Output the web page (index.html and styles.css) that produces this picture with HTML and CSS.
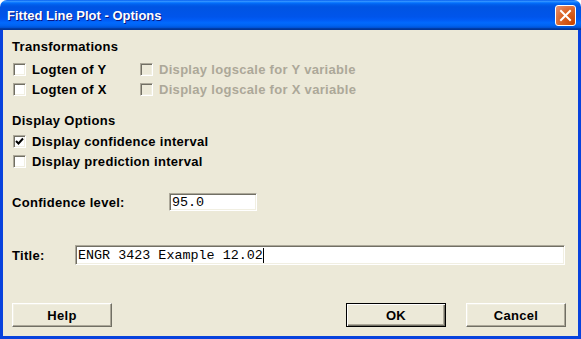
FILE: index.html
```html
<!DOCTYPE html>
<html lang="en">
<head>
    <meta charset="UTF-8">
    <title>Fitted Line Plot - Options</title>
    <link rel="stylesheet" href="styles.css">
</head>
<body>

    <div class="window">
        <div class="titlebar">
            <span class="title-text">Fitted Line Plot - Options</span>
            <button class="close-btn" aria-label="Close">
                <svg width="13" height="13" viewBox="0 0 13 13">
                    <path d="M2 2 L11 11 M11 2 L2 11" stroke="#fff" stroke-width="2" stroke-linecap="square"/>
                </svg>
            </button>
        </div>

        <div class="client">
            <div class="heading">Transformations</div>
            <div class="grid-rows">
                <label class="opt"><span class="box"></span>Logten of Y</label>
                <label class="opt disabled"><span class="box"></span>Display logscale for Y variable</label>
                <label class="opt"><span class="box"></span>Logten of X</label>
                <label class="opt disabled"><span class="box"></span>Display logscale for X variable</label>
            </div>

            <div class="heading heading-second">Display Options</div>
            <div class="rows">
                <label class="opt">
                    <span class="box">
                        <svg width="9" height="9" viewBox="0 0 9 9"><path d="M1 4 L3.5 6.5 L8 1.5" stroke="#000" stroke-width="2" fill="none"/></svg>
                    </span>Display confidence interval
                </label>
                <label class="opt"><span class="box"></span>Display prediction interval</label>
            </div>

            <div class="field conf-row">
                <span class="field-label conf-label">Confidence level:</span>
                <div class="edit conf-edit">95.0</div>
            </div>

            <div class="field title-row">
                <span class="field-label title-label">Title:</span>
                <div class="edit title-edit">ENGR 3423 Example 12.02<span class="caret"></span></div>
            </div>

            <div class="button-row">
                <button class="btn">Help</button>
                <div class="right-buttons">
                    <button class="btn default">OK</button>
                    <button class="btn">Cancel</button>
                </div>
            </div>
        </div>
    </div>

</body>
</html>
```

FILE: styles.css
```css
body {
    margin: 0;
    background-color: #fff;
    font-family: "Liberation Sans", Arial, sans-serif;
}
.window {
    width: 581px;
    height: 339px;
    display: flex;
    flex-direction: column;
    box-sizing: border-box;
}
.titlebar {
    height: 30px;
    flex: none;
    display: flex;
    align-items: center;
    justify-content: space-between;
    padding: 0 5px 0 7px;
    border-radius: 7px 7px 0 0;
    background: linear-gradient(#0058ee 0%, #3593ff 4%, #288eff 6%, #127dff 8%, #036ffc 10%, #0262ee 14%, #0057e5 20%, #0054e3 24%, #0055eb 56%, #005bf5 66%, #026afe 76%, #0062ef 86%, #0052d6 92%, #0040ab 94%, #003092 100%);
}
.title-text {
    color: #fff;
    font-weight: bold;
    font-size: 13px;
    text-shadow: 1px 1px #0a1883;
    padding-top: 1px;
}
.close-btn {
    width: 21px;
    height: 21px;
    padding: 0;
    border: 1px solid #fff;
    border-radius: 3px;
    background: radial-gradient(circle at 90% 90%, #cc4600 0%, #dc6527 55%, #e5937a 100%);
    display: flex;
    align-items: center;
    justify-content: center;
    margin-top: 1px;
}
.client {
    flex: 1;
    background-color: #ece9d8;
    border: 3px solid #0842dd;
    border-top: none;
    padding: 9px 12px 0 9px;
    display: flex;
    flex-direction: column;
    font-size: 13px;
    font-weight: bold;
    letter-spacing: 0.3px;
    color: #000;
}
.heading {
    height: 16px;
    line-height: 16px;
}
.heading-second {
    margin-top: 14px;
}
.grid-rows {
    margin-top: 4px;
    display: grid;
    grid-template-columns: 127px auto;
}
.rows {
    margin-top: 2px;
}
.opt {
    height: 20px;
    display: flex;
    align-items: center;
    padding-left: 1px;
}
.box {
    width: 13px;
    height: 13px;
    box-sizing: border-box;
    margin-right: 6px;
    background-color: #fff;
    border: 1px solid;
    border-color: #aca899 #fff #fff #aca899;
    box-shadow: inset 1px 1px #716f64, inset -1px -1px #f1efe2;
    display: flex;
    align-items: center;
    justify-content: center;
    flex: none;
}
.disabled {
    color: #aca899;
}
.disabled .box {
    background-color: #ece9d8;
}
.field {
    display: flex;
    align-items: center;
}
.conf-row {
    margin-top: 21px;
    height: 20px;
}
.field-label {
    flex: none;
}
.conf-label {
    width: 157px;
}
.title-label {
    width: 63px;
}
.edit {
    box-sizing: border-box;
    background-color: #fff;
    border: 1px solid;
    border-color: #aca899 #fff #fff #aca899;
    box-shadow: inset 1px 1px #716f64, inset -1px -1px #f1efe2;
    font-family: "Liberation Mono", "Courier New", monospace;
    font-weight: normal;
    font-size: 13.4px;
    letter-spacing: 0;
    padding: 0 2px;
    display: flex;
    align-items: center;
}
.conf-edit {
    width: 88px;
    height: 18px;
}
.title-row {
    margin-top: 33px;
    height: 20px;
}
.title-edit {
    width: 490px;
    height: 20px;
}
.caret {
    display: inline-block;
    width: 1px;
    height: 15px;
    background-color: #000;
}
.button-row {
    margin-top: 38px;
    display: flex;
    justify-content: space-between;
}
.right-buttons {
    display: flex;
    gap: 20px;
}
.btn {
    width: 100px;
    height: 24px;
    box-sizing: border-box;
    background-color: #ece9d8;
    border: 1px solid;
    border-color: #fff #716f64 #716f64 #fff;
    box-shadow: inset -1px -1px #aca899, inset 1px 1px #f1efe2;
    font-family: "Liberation Sans", Arial, sans-serif;
    font-weight: bold;
    font-size: 13px;
    letter-spacing: 0.3px;
    color: #000;
    padding: 0;
}
.default {
    border: 1px solid #000;
    box-shadow: inset 1px 1px #fff, inset -1px -1px #716f64, inset -2px -2px #aca899;
}
```
